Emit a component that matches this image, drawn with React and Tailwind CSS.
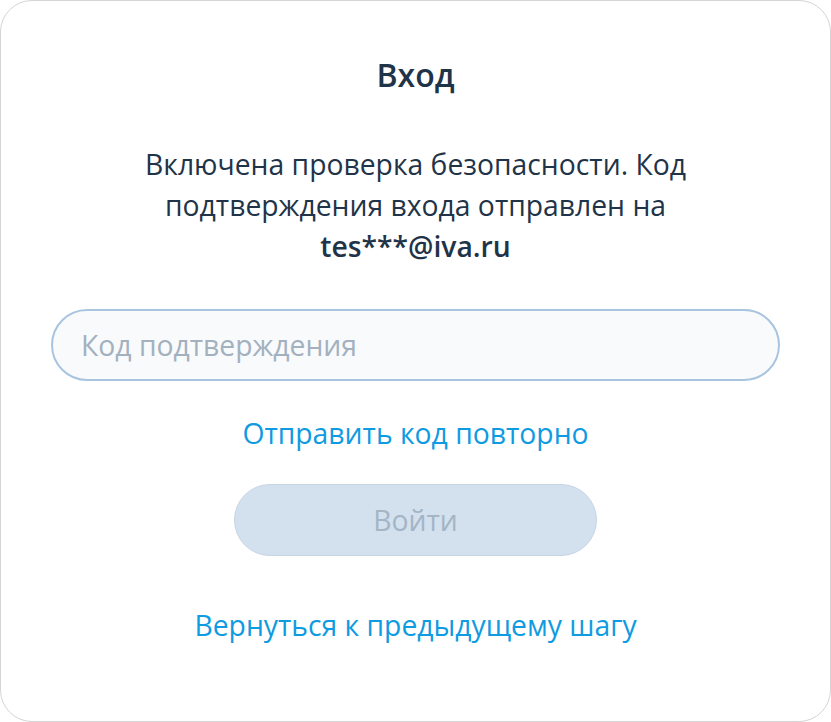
import { useState } from "react";

const App = () => {
  const [code, setCode] = useState("");

  return (
    <div className="w-[831px] h-[722px] bg-white font-['Open_Sans',sans-serif]">
      <div className="h-full w-full rounded-[32px] border border-[#d4d4d4] bg-white flex flex-col items-center pt-[50px] px-[50px]">
        <h1 className="text-[32px] leading-[48px] font-semibold text-[#1f3448]">Вход</h1>
        <p className="mt-[45px] max-w-[600px] text-center text-[28.3px] leading-[41px] text-[#1f3448]">
          Включена проверка безопасности. Код подтверждения входа отправлен на{" "}
          <span className="font-semibold">tes***@iva.ru</span>
        </p>
        <input
          type="text"
          value={code}
          onChange={(e) => setCode(e.target.value)}
          placeholder="Код подтверждения"
          className="mt-[42px] w-full h-[72px] rounded-full border-2 border-[#a9c4de] bg-[#f8fafc] px-[28px] text-[28.3px] text-[#1f3448] placeholder:text-[#a3b1bf] outline-none"
        />
        <button className="mt-[34px] text-[28.3px] leading-[36px] text-[#0f9be1]">
          Отправить код повторно
        </button>
        <button
          disabled
          className="mt-[33px] w-[363px] h-[72px] rounded-full border border-[#c4d5e6] bg-[#d3e1ee] text-[28.3px] text-[#a4b5c6]"
        >
          Войти
        </button>
        <button className="mt-[51px] text-[28.3px] leading-[36px] text-[#0f9be1]">
          Вернуться к предыдущему шагу
        </button>
      </div>
    </div>
  );
};

export default App;
